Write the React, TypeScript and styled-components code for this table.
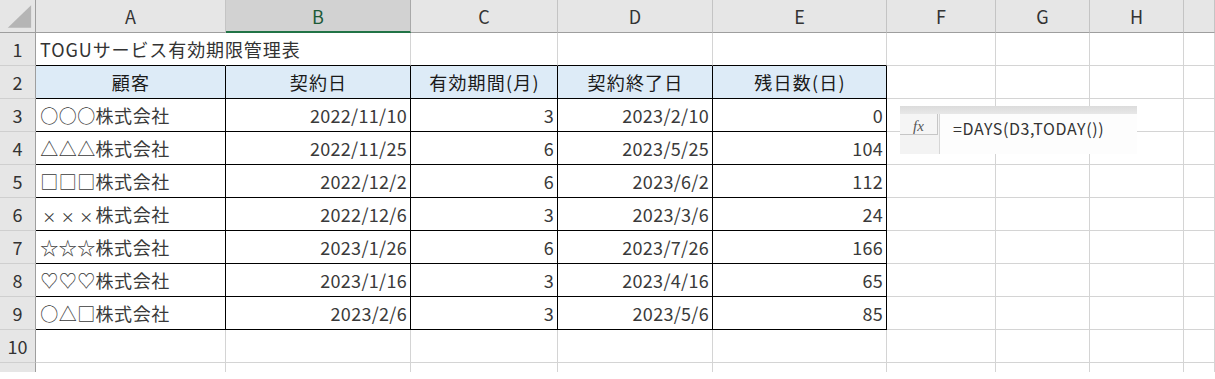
import { createGlobalStyle } from 'styled-components';
import styled from 'styled-components';

const GlobalStyle = createGlobalStyle`
  html, body {
    margin: 0;
    padding: 0;
    background: #ffffff;
  }
  body {
    font-family: "Noto Sans CJK JP", "Noto Sans", sans-serif;
  }
`;

const FONT = `"Noto Sans CJK JP", "Noto Sans", sans-serif`;
const GRID = '#d4d4d4';
const INK = '#000000';

const Sheet = styled.div`
  position: relative;
  display: grid;
  grid-template-columns: 36px 190px 185px 147px 155px 174px 109px 94px 94px 1fr;
  grid-auto-rows: 33px;
  height: 372px;
  overflow: hidden;
  background: #ffffff;
  font-family: ${FONT};
`;

const Corner = styled.div`
  box-sizing: border-box;
  background: #e6e6e6;
  border-right: 1px solid #9e9e9e;
  border-bottom: 1px solid #9e9e9e;
  display: flex;
  align-items: flex-start;
  justify-content: flex-start;
`;

const ColHead = styled.div<{ $active?: boolean }>`
  box-sizing: border-box;
  display: flex;
  align-items: center;
  justify-content: center;
  background: ${({ $active }) => ($active ? '#d2d2d2' : '#e6e6e6')};
  border-right: 1px solid ${({ $active }) => ($active ? '#a9a9a9' : '#c4c4c4')};
  border-bottom: ${({ $active }) => ($active ? '2px solid #217346' : '1px solid #9e9e9e')};
  color: ${({ $active }) => ($active ? '#1d5a37' : '#333333')};
  font-size: 18px;
  padding-top: ${({ $active }) => ($active ? '1px' : '0')};
`;

const RowHead = styled.div`
  box-sizing: border-box;
  display: flex;
  align-items: center;
  justify-content: center;
  background: #e6e6e6;
  border-right: 1px solid #9e9e9e;
  border-bottom: 1px solid #cfcfcf;
  color: #333333;
  font-size: 18px;
`;

const Cell = styled.div<{
  $align?: 'left' | 'right' | 'center';
  $right?: string;
  $bottom?: string;
  $head?: boolean;
}>`
  box-sizing: border-box;
  display: flex;
  align-items: center;
  justify-content: ${({ $align }) =>
    $align === 'right' ? 'flex-end' : $align === 'center' ? 'center' : 'flex-start'};
  padding: 0 3px 0 4px;
  white-space: nowrap;
  overflow: visible;
  border-right: 1px solid ${({ $right }) => $right ?? GRID};
  border-bottom: 1px solid ${({ $bottom }) => $bottom ?? GRID};
  background: ${({ $head }) => ($head ? '#ddebf7' : 'transparent')};
  color: ${({ $head }) => ($head ? '#1a1a1a' : '#3a3a3a')};
  font-size: 18px;
  font-weight: 400;
  letter-spacing: ${({ $head }) => ($head ? '1.2px' : '0.3px')};
`;

const Title = styled(Cell)`
  position: relative;
  z-index: 1;
  color: #333333;
  letter-spacing: 0.9px;
`;

const Name = styled.span`
  letter-spacing: 0.6px;
`;

const Mark = styled.span<{ $small?: boolean }>`
  display: inline-block;
  width: 18.5px;
  text-align: center;
  font-size: ${({ $small }) => ($small ? '14px' : '18px')};
  letter-spacing: 0;
`;

const FormulaBar = styled.div`
  position: absolute;
  left: 900px;
  top: 106px;
  width: 237px;
  height: 48px;
  display: flex;
  flex-direction: column;
  background: #f3f3f3;
  z-index: 2;
`;

const BarStrip = styled.div`
  height: 8px;
  background: linear-gradient(#dcdcdc, #e8e8e8);
`;

const BarBody = styled.div`
  flex: 1;
  display: flex;
`;

const FxColumn = styled.div`
  width: 38px;
  display: flex;
  flex-direction: column;
`;

const FxButton = styled.div`
  box-sizing: border-box;
  height: 21px;
  display: flex;
  align-items: center;
  justify-content: center;
  background: #f5f5f5;
  border-right: 1px solid #c6c6c6;
  border-bottom: 1px solid #c6c6c6;
  color: #555555;
  font-family: "Liberation Serif", "DejaVu Serif", serif;
  font-style: italic;
  font-size: 15px;
  padding-top: 4px;
`;

const FormulaInput = styled.div`
  flex: 1;
  margin-left: 1px;
  border-left: 1px solid #d6d6d6;
  background: #fdfdfd;
  padding: 4px 0 0 13px;
  line-height: 20px;
  font-family: ${FONT};
  font-size: 16px;
  letter-spacing: 0.6px;
  color: #333333;
`;

type Align = 'left' | 'right' | 'center';

const columns = ['A', 'B', 'C', 'D', 'E', 'F', 'G', 'H', ''];

const headers = ['顧客', '契約日', '有効期間(月)', '契約終了日', '残日数(日)'];

const rows: [string, string, string, string, string][] = [
  ['○○○', '2022/11/10', '3', '2023/2/10', '0'],
  ['△△△', '2022/11/25', '6', '2023/5/25', '104'],
  ['□□□', '2022/12/2', '6', '2023/6/2', '112'],
  ['×××', '2022/12/6', '3', '2023/3/6', '24'],
  ['☆☆☆', '2023/1/26', '6', '2023/7/26', '166'],
  ['♡♡♡', '2023/1/16', '3', '2023/4/16', '65'],
  ['○△□', '2023/2/6', '3', '2023/5/6', '85'],
];

const Company = ({ marks }: { marks: string }) => (
  <Name>
    {Array.from(marks).map((m, i) => (
      <Mark key={i} $small={m === '×'}>
        {m}
      </Mark>
    ))}
    株式会社
  </Name>
);

const emptyCells = (from: number, row: number) =>
  columns.slice(from).map((c, i) => <Cell key={`${c || 'I'}${row}-${i}`} />);

export default function App() {
  return (
    <>
      <GlobalStyle />
      <Sheet>
        <Corner>
          <svg width="36" height="32" viewBox="0 0 36 32">
            <polygon points="8,28 32,28 32,5" fill="#b5b5b5" />
          </svg>
        </Corner>
        {columns.map((c, i) => (
          <ColHead key={i} $active={c === 'B'}>
            {c}
          </ColHead>
        ))}

        {/* row 1: title overflows into B */}
        <RowHead>1</RowHead>
        <Title $right="transparent" $bottom={INK}>
          TOGUサービス有効期限管理表
        </Title>
        {columns.slice(1, 5).map((c) => (
          <Cell key={`${c}1`} $bottom={INK} />
        ))}
        {emptyCells(5, 1)}

        {/* row 2: table header */}
        <RowHead>2</RowHead>
        {headers.map((h) => (
          <Cell key={h} $head $align="center" $right={INK} $bottom={INK}>
            {h}
          </Cell>
        ))}
        {emptyCells(5, 2)}

        {rows.map((r, i) => {
          const aligns: Align[] = ['left', 'right', 'right', 'right', 'right'];
          return [
            <RowHead key={`h${i}`}>{i + 3}</RowHead>,
            ...r.map((v, j) => (
              <Cell key={`c${i}-${j}`} $align={aligns[j]} $right={INK} $bottom={INK}>
                {j === 0 ? <Company marks={v} /> : v}
              </Cell>
            )),
            ...emptyCells(5, i + 3),
          ];
        })}

        <RowHead>10</RowHead>
        {emptyCells(0, 10)}
        <RowHead />
        {emptyCells(0, 11)}

        <FormulaBar>
          <BarStrip />
          <BarBody>
            <FxColumn>
              <FxButton>fx</FxButton>
            </FxColumn>
            <FormulaInput>=DAYS(D3,TODAY())</FormulaInput>
          </BarBody>
        </FormulaBar>
      </Sheet>
    </>
  );
}
